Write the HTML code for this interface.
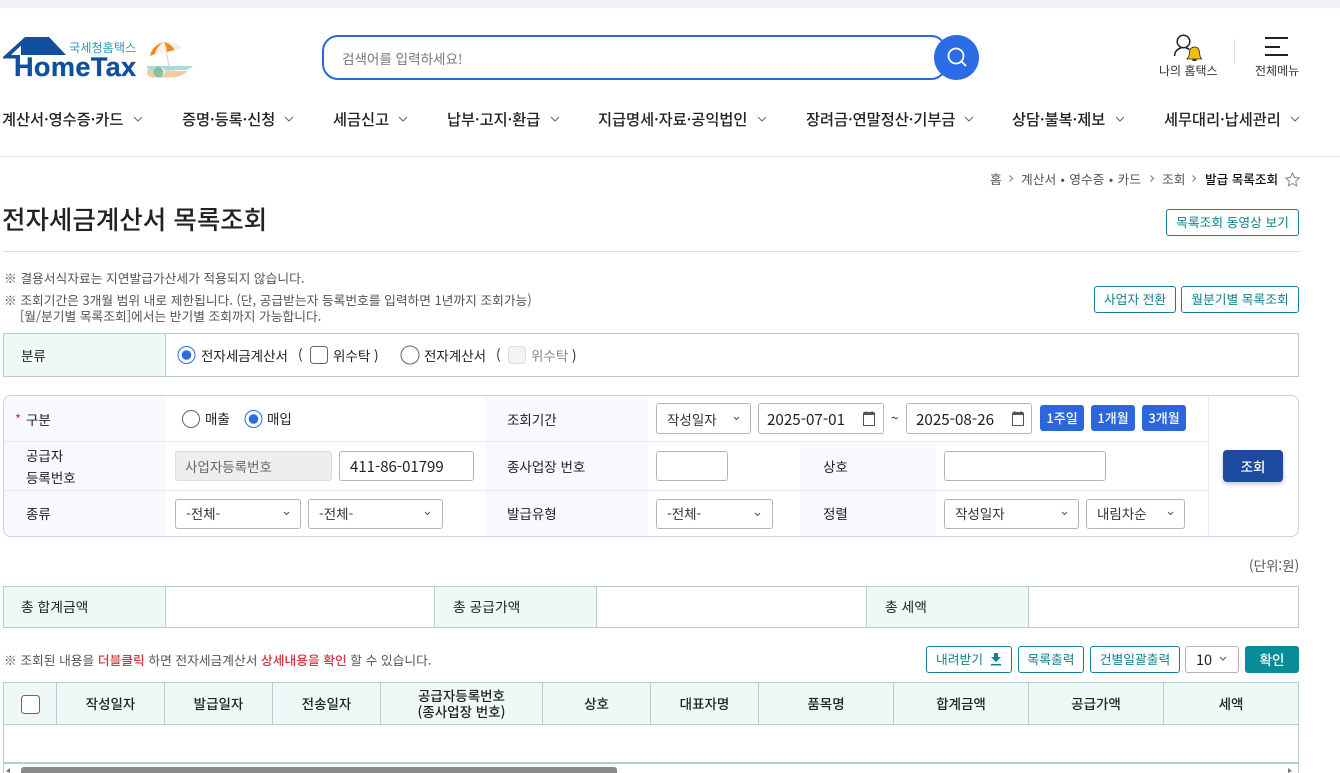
<!DOCTYPE html>
<html lang="ko"><head><meta charset="utf-8"><title>전자세금계산서 목록조회</title>
<style>
html,body{margin:0;padding:0;background:#fff}
#p{position:relative;width:1340px;height:773px;overflow:hidden;background:#fff;font-family:"Liberation Sans","Noto Sans CJK KR",sans-serif;font-size:13px;color:#222}
#p *{box-sizing:border-box}
.t{position:absolute;white-space:nowrap;line-height:20px;height:20px}
.k{font-family:"Noto Sans CJK KR","Liberation Sans",sans-serif}
.b{position:absolute}
.n{font-family:"Noto Sans CJK KR",sans-serif;font-size:15.250px;font-weight:500;color:#222;top:109px}
.g{color:#555;font-size:12.750px;font-family:"Noto Sans CJK KR",sans-serif}
.tb{position:absolute;border:1px solid #12808f;border-radius:3px;background:#fff;color:#12808f;font:12.750px/1 "Noto Sans CJK KR",sans-serif;display:flex;align-items:center;justify-content:center;white-space:nowrap}
.in{position:absolute;background:#fff;border:1px solid #b5b5b5;border-radius:3px;font:13.500px "Noto Sans CJK KR",sans-serif;color:#333;display:flex;align-items:center;padding-left:10px;white-space:nowrap}
.r3{padding-bottom:2px}
.l{position:absolute;font:13.500px/20px "Noto Sans CJK KR",sans-serif;color:#222;white-space:nowrap}
.th{position:absolute;background:#eef8f7;border:1px solid #b4cfd4}
.tc{position:absolute;top:683px;height:41px;padding-bottom:2px;border-right:1px solid #b4cfd4;display:flex;align-items:center;justify-content:center;text-align:center;font:500 13.500px/16px "Noto Sans CJK KR",sans-serif;color:#222}
.bl{position:absolute;top:405px;height:26px;width:44px;background:#2b66dd;border-radius:3px;color:#fff;font:500 13px/26px "Noto Sans CJK KR",sans-serif;text-align:center}
svg{position:absolute;overflow:visible}
</style></head><body><div id="p">
<div class="b" style="left:0;top:0;width:1340px;height:8px;background:#f0f2f7"></div>

<svg style="left:0;top:30px" width="200" height="55" viewBox="0 0 200 55">
<path d="M3 27 L25 7 H49 L66 25 H20 V28.500 H3Z" fill="#0f4f9e"/>
<path d="M11 25 L21 15.500 V25Z" fill="#fff"/>
<path d="M150 26 Q152 16 163 12 Q156 18 155 24Z" fill="#f08a1d"/>
<path d="M155.500 24 Q157 17 163 12.500 Q166 17 166.500 22Z" fill="#f5f2ea"/>
<path d="M167 22 Q166.500 17 164 12 Q172 14 174.500 20Z" fill="#f08a1d"/>
<path d="M175 20 Q172.500 14 165 12 Q177 12 182 18Z" fill="#eeeeea"/>
<path d="M166 19 L170 43" stroke="#e8cdb0" stroke-width="1"/>
<path d="M147 36 H193 Q191 38 186 40 L148 41Z" fill="#a9dbd9"/>
<path d="M147 41 H188 Q180 48 170 47.500 H152 Q146 46 147 41Z" fill="#f6c9a2"/>
<circle cx="159" cy="42" r="5.500" fill="#7fc3a0"/><path d="M160 36.500 Q165 41 162 47 Q165.500 44.500 164.500 40 Q163 37 160 36.500Z" fill="#f0f0f0"/>
</svg>
<div class="t k" style="left:69px;top:37px;font-size:12.200px;color:#2f9db5">국세청홈택스</div>
<div class="t" style="left:14px;top:53px;font:bold 27.200px/28px 'Liberation Sans',sans-serif;height:28px;color:#0f4f9e;letter-spacing:.3px;-webkit-text-stroke:.3px #0f4f9e">HomeTax</div>

<div class="b" style="left:322px;top:35px;width:625px;height:45px;border:2px solid #2a68d8;border-radius:16px"></div>
<div class="t k" style="left:342px;top:48px;font-size:13.550px;color:#777">검색어를 입력하세요!</div>
<div class="b" style="left:934px;top:34.500px;width:45px;height:45px;border-radius:50%;background:#2b6be6"></div>
<svg style="left:934px;top:34px" width="45" height="45"><circle cx="22" cy="22" r="7.500" fill="none" stroke="#fff" stroke-width="1.800"/><path d="M27.500 27.500 L32 32" stroke="#fff" stroke-width="1.800"/></svg>

<svg style="left:1170px;top:32px" width="40" height="32">
<circle cx="13.500" cy="9.500" r="6.300" fill="none" stroke="#222" stroke-width="1.500"/>
<path d="M4.500 24 Q5 17.500 11 16 M16 16 Q18 16.500 19.500 17.500" fill="none" stroke="#222" stroke-width="1.500"/>
<path d="M16.500 27 Q19 26 19.500 20.500 Q20 15 24.500 15 Q29 15 29.500 20.500 Q30 26 32 27Z" fill="#f2bd0f" stroke="#222" stroke-width=".8"/>
<rect x="22.500" y="27.500" width="4" height="1.500" fill="#222"/>
</svg>
<div class="b" style="left:1234px;top:39px;width:1px;height:25px;background:#ddd"></div>
<div class="b" style="left:1265px;top:37px;width:23px;height:2px;background:#222"></div>
<div class="b" style="left:1265px;top:46px;width:15px;height:2px;background:#222"></div>
<div class="b" style="left:1265px;top:54px;width:23px;height:2px;background:#222"></div>
<div class="t k" style="left:1159px;top:61px;font-size:12px;color:#333">나의 홈택스</div>
<div class="t k" style="left:1255px;top:61px;font-size:12px;color:#333">전체메뉴</div>

<div class="t n" style="left:2px">계산서·영수증·카드</div>
<div class="t n" style="left:182px">증명·등록·신청</div>
<div class="t n" style="left:333px">세금신고</div>
<div class="t n" style="left:447px">납부·고지·환급</div>
<div class="t n" style="left:598px">지급명세·자료·공익법인</div>
<div class="t n" style="left:806px">장려금·연말정산·기부금</div>
<div class="t n" style="left:1012px">상담·불복·제보</div>
<div class="t n" style="left:1164px">세무대리·납세관리</div>
<svg style="left:0;top:0" width="1340" height="773" fill="none" stroke="#666" stroke-width="1">
<path d="M134 117l4 4 4-4M285 117l4 4 4-4M399 117l4 4 4-4M551 117l4 4 4-4M758 117l4 4 4-4M965 117l4 4 4-4M1116 117l4 4 4-4M1291 117l4 4 4-4"/>
<path d="M1009.500 175.500l3 3-3 3M1150.500 175.500l3 3-3 3M1192.500 175.500l3 3-3 3" stroke="#777"/>
</svg>
<div class="b" style="left:0;top:156px;width:1340px;height:1px;background:#e2e2e2"></div>

<div class="t g" style="left:990px;top:169px">홈</div>
<div class="t g" style="left:1021px;top:169px;word-spacing:.8px">계산서 • 영수증 • 카드</div>
<div class="t g" style="left:1162px;top:169px">조회</div>
<div class="t k" style="left:1205px;top:169px;font-size:12.600px;font-weight:500;color:#111">발급 목록조회</div>
<svg style="left:1285px;top:172px" width="15" height="15"><path d="M7.500 1l2 4.500 4.800.5-3.600 3.200 1 4.800-4.200-2.500-4.200 2.500 1-4.800L.7 6l4.800-.5z" fill="none" stroke="#888" stroke-width="1"/></svg>

<div class="t k" style="left:2px;top:206px;height:26px;font-size:25.500px;line-height:26px;font-weight:500;color:#222">전자세금계산서 목록조회</div>
<div class="tb" style="left:1166px;top:209px;width:133px;height:27px">목록조회 동영상 보기</div>
<div class="b" style="left:3px;top:251px;width:1296px;height:1px;background:#ddd"></div>

<div class="t g" style="left:4px;top:268px">※ 결용서식자료는 지연발급가산세가 적용되지 않습니다.</div>
<div class="t g" style="left:4px;top:290px">※ 조회기간은 3개월 범위 내로 제한됩니다. (단, 공급받는자 등록번호를 입력하면 1년까지 조회가능)</div>
<div class="t g" style="left:20px;top:306px">[월/분기별 목록조회]에서는 반기별 조회까지 가능합니다.</div>
<div class="tb" style="left:1094px;top:286px;width:82px;height:27px">사업자 전환</div>
<div class="tb" style="left:1181px;top:286px;width:118px;height:27px">월분기별 목록조회</div>

<div class="b" style="left:3px;top:333px;width:1296px;height:44px;border:1px solid #b4cfd4"></div>
<div class="th" style="left:3px;top:333px;width:163px;height:44px"></div>
<div class="l" style="left:21px;top:345px">분류</div>
<svg style="left:0;top:0" width="600" height="400">
<circle cx="186.500" cy="355" r="8.500" fill="#fff" stroke="#2b6be6"/><circle cx="186.500" cy="355" r="4.800" fill="#2b6be6"/>
<rect x="310.500" y="346.500" width="17" height="17" rx="3" fill="#fff" stroke="#666"/>
<circle cx="410" cy="355" r="9" fill="#fff" stroke="#666"/>
<rect x="508.500" y="346.500" width="17" height="17" rx="3" fill="#f3f3f3" stroke="#ddd"/>
</svg>
<div class="l" style="left:201px;top:345px">전자세금계산서</div>
<div class="l" style="left:298px;top:344px">(</div>
<div class="l" style="left:333px;top:345px">위수탁 )</div>
<div class="l" style="left:424px;top:345px">전자계산서</div>
<div class="l" style="left:496px;top:344px">(</div>
<div class="l" style="left:531px;top:345px;color:#888">위수탁 <span style="color:#222">)</span></div>

<div class="b" style="left:3px;top:395px;width:1296px;height:142px;border:1px solid #c6d2e4;border-radius:8px;overflow:hidden">
<div class="b" style="left:0;top:0;width:162px;height:140px;background:#f7f9fe"></div>
<div class="b" style="left:481px;top:0;width:163px;height:140px;background:#f7f9fe"></div>
<div class="b" style="left:796px;top:45px;width:136px;height:95px;background:#f7f9fe"></div>
<div class="b" style="left:0;top:45px;width:1204px;height:1px;background:#e6ebf3"></div>
<div class="b" style="left:0;top:94px;width:1204px;height:1px;background:#e6ebf3"></div>
<div class="b" style="left:1204px;top:0;width:1px;height:140px;background:#e6ebf3"></div>
</div>
<div class="l" style="left:15px;top:409px;font-size:13px;color:#d81e50">*</div>
<div class="l" style="left:26px;top:409px">구분</div>
<div class="l" style="left:26px;top:445px">공급자</div>
<div class="l" style="left:26px;top:467px">등록번호</div>
<div class="l" style="left:26px;top:503px">종류</div>
<svg style="left:0;top:0" width="400" height="440">
<circle cx="191" cy="419" r="8.500" fill="#fff" stroke="#666"/>
<circle cx="253.500" cy="419" r="8.500" fill="#fff" stroke="#2b6be6"/><circle cx="253.500" cy="419" r="4.800" fill="#2b6be6"/>
</svg>
<div class="l" style="left:205px;top:408px">매출</div>
<div class="l" style="left:267px;top:408px">매입</div>
<div class="in" style="left:175px;top:451px;width:157px;height:30px;background:#eee;border-color:#ddd;color:#666;padding-left:9px">사업자등록번호</div>
<div class="in" style="left:339px;top:451px;width:135px;height:30px;color:#222;font-size:15px">411-86-01799</div>
<div class="in r3" style="left:175px;top:499px;width:126px;height:30px">-전체-</div>
<div class="in r3" style="left:308px;top:499px;width:135px;height:30px">-전체-</div>
<div class="l" style="left:507px;top:409px">조회기간</div>
<div class="l" style="left:507px;top:456px">종사업장 번호</div>
<div class="l" style="left:507px;top:503px">발급유형</div>
<div class="in" style="left:656px;top:403px;width:95px;height:31px">작성일자</div>
<div class="in" style="left:758px;top:403px;width:126px;height:31px;padding-left:8px;color:#222;font-size:15.200px">2025-07-01</div>
<div class="l" style="left:891px;top:407px">~</div>
<div class="in" style="left:906px;top:403px;width:126px;height:31px;padding-left:9px;color:#222;font-size:15.200px">2025-08-26</div>
<div class="bl" style="left:1040px">1주일</div>
<div class="bl" style="left:1091px">1개월</div>
<div class="bl" style="left:1142px">3개월</div>
<div class="in" style="left:656px;top:451px;width:72px;height:30px"></div>
<div class="l" style="left:823px;top:456px">상호</div>
<div class="in" style="left:944px;top:451px;width:162px;height:30px"></div>
<div class="in r3" style="left:656px;top:499px;width:117px;height:30px">-전체-</div>
<div class="l" style="left:823px;top:503px">정렬</div>
<div class="in r3" style="left:944px;top:499px;width:135px;height:30px">작성일자</div>
<div class="in r3" style="left:1086px;top:499px;width:99px;height:30px">내림차순</div>
<svg style="left:0;top:0" width="1200" height="530" fill="none" stroke="#555" stroke-width="1">
<path d="M863.500 413.500h11v12h-11zM1012.500 413.500h11v12h-11z"/>
<path d="M863.500 412h11v3h-11zM1012.500 412h11v3h-11z" fill="#555" stroke="none"/>
<path d="M866 411v2M872 411v2M1015 411v2M1021 411v2"/>
<path d="M734 417l2.500 2.500 2.500-2.500M284 512l2.500 2.500 2.500-2.500M425 512l2.500 2.500 2.500-2.500M755 513l2.500 2.500 2.500-2.500M1062 512l2.500 2.500 2.500-2.500M1168 512l2.500 2.500 2.500-2.500"/>
</svg>
<div class="b" style="left:1223px;top:450px;width:60px;height:32px;border-radius:4px;background:#1c4a9f;color:#fff;font:500 13.500px/32px 'Noto Sans CJK KR',sans-serif;text-align:center;box-shadow:0 2px 4px rgba(28,74,159,.3)">조회</div>

<div class="t g" style="left:1249px;top:555px;font-size:13.500px">(단위:원)</div>

<div class="b" style="left:3px;top:586px;width:1296px;height:42px;border:1px solid #b4cfd4"></div>
<div class="th" style="left:3px;top:586px;width:163px;height:42px"></div>
<div class="th" style="left:434px;top:586px;width:163px;height:42px"></div>
<div class="th" style="left:866px;top:586px;width:163px;height:42px"></div>
<div class="l" style="left:21px;top:596px;font-size:13.800px">총 합계금액</div>
<div class="l" style="left:453px;top:596px;font-size:13.800px">총 공급가액</div>
<div class="l" style="left:885px;top:596px;font-size:13.800px">총 세액</div>

<div class="t g" style="left:4px;top:650px">※ 조회된 내용을 <span style="color:#d9343f;font-weight:500">더블클릭</span> 하면 전자세금계산서 <span style="color:#d9343f;font-weight:500">상세내용을 확인</span> 할 수 있습니다.</div>
<div class="tb" style="left:926px;top:646px;width:86px;height:27px;justify-content:flex-start;padding-left:9px">내려받기</div>
<svg style="left:990px;top:652px" width="14" height="14"><path d="M4 1h4v4h3L6 10 1 5h3zM1 12h10v1.500H1z" fill="#12808f"/></svg>
<div class="tb" style="left:1018px;top:646px;width:66px;height:27px">목록출력</div>
<div class="tb" style="left:1090px;top:646px;width:90px;height:27px">건별일괄출력</div>
<div class="in" style="left:1185px;top:646px;width:54px;height:27px;font-size:14.500px;color:#222">10</div>
<svg style="left:1219px;top:656px" width="10" height="6"><path d="M1 1l3 3 3-3" fill="none" stroke="#555"/></svg>
<div class="b" style="left:1245px;top:646px;width:54px;height:27px;border-radius:3px;background:#078c98;color:#fff;font:500 13.500px/27px 'Noto Sans CJK KR',sans-serif;text-align:center">확인</div>

<div class="b" style="left:3px;top:682px;width:1296px;height:43px;background:#eef8f7;border:1px solid #b4cfd4"></div>
<div class="b" style="left:56px;top:683px;width:1px;height:41px;background:#b4cfd4"></div>
<svg style="left:21px;top:695px" width="20" height="20"><rect x=".5" y=".5" width="18" height="18" rx="3" fill="#fff" stroke="#666"/></svg>
<div class="tc" style="left:57px;width:108px">작성일자</div>
<div class="tc" style="left:165px;width:108px">발급일자</div>
<div class="tc" style="left:273px;width:108px">전송일자</div>
<div class="tc" style="left:381px;width:162px">공급자등록번호<br>(종사업장 번호)</div>
<div class="tc" style="left:543px;width:108px">상호</div>
<div class="tc" style="left:651px;width:108px">대표자명</div>
<div class="tc" style="left:759px;width:135px">품목명</div>
<div class="tc" style="left:894px;width:135px">합계금액</div>
<div class="tc" style="left:1029px;width:135px">공급가액</div>
<div class="tc" style="left:1164px;width:134px;border-right:0">세액</div>
<div class="b" style="left:3px;top:725px;width:1296px;height:48px;border-left:1px solid #b4cfd4;border-right:1px solid #b4cfd4"></div>
<div class="b" style="left:3px;top:762px;width:1296px;height:2px;background:#b4cfd4"></div>
<div class="b" style="left:21px;top:767px;width:596px;height:6px;background:#8a8a8a;border-radius:3px 3px 0 0"></div>
<svg style="left:0;top:0" width="1340" height="773"><path d="M6 771l4-3v5zM1288 768l4 3-4 2z" fill="#777"/></svg>
</div></body></html>
